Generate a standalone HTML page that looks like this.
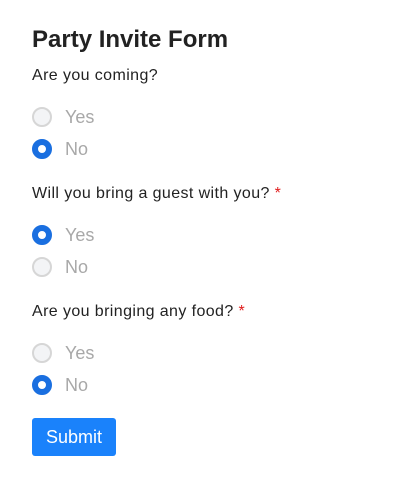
<!DOCTYPE html>
<html><head><style>
body{margin:0;background:#fff;font-family:"Liberation Sans",sans-serif;width:400px;height:480px;position:relative;overflow:hidden}
.a{position:absolute;left:32px;white-space:nowrap}
h1{position:absolute;left:32px;top:24px;margin:0;font-size:24px;font-weight:bold;color:#222;line-height:32px}
.q{font-size:16px;letter-spacing:0.4px;color:#222;line-height:20px}
.q span{color:#e01b1b}
.r{height:20px;display:flex;align-items:center}
.c{width:16px;height:16px;border-radius:50%;border:2px solid #d6d6d6;background:#f3f4f6;box-sizing:content-box}
.c.on{width:8px;height:8px;border:6px solid #1a6fe0;background:#fff}
.r b{font-weight:normal;font-size:18px;color:#a8a8a8;margin-left:13px}
.btn{position:absolute;left:32px;top:418px;width:84px;height:38px;background:#1a82fb;border-radius:3px;color:#fff;font-size:18px;line-height:38px;text-align:center}
</style></head><body>
<h1>Party Invite Form</h1>
<div class="a q" style="top:66px">Are you coming?</div>
<div class="a r" style="top:107px"><div class="c"></div><b>Yes</b></div>
<div class="a r" style="top:139px"><div class="c on"></div><b>No</b></div>
<div class="a q" style="top:184px">Will you bring a guest with you? <span>*</span></div>
<div class="a r" style="top:225px"><div class="c on"></div><b>Yes</b></div>
<div class="a r" style="top:257px"><div class="c"></div><b>No</b></div>
<div class="a q" style="top:302px">Are you bringing any food? <span>*</span></div>
<div class="a r" style="top:343px"><div class="c"></div><b>Yes</b></div>
<div class="a r" style="top:375px"><div class="c on"></div><b>No</b></div>
<div class="btn">Submit</div>
</body></html>
